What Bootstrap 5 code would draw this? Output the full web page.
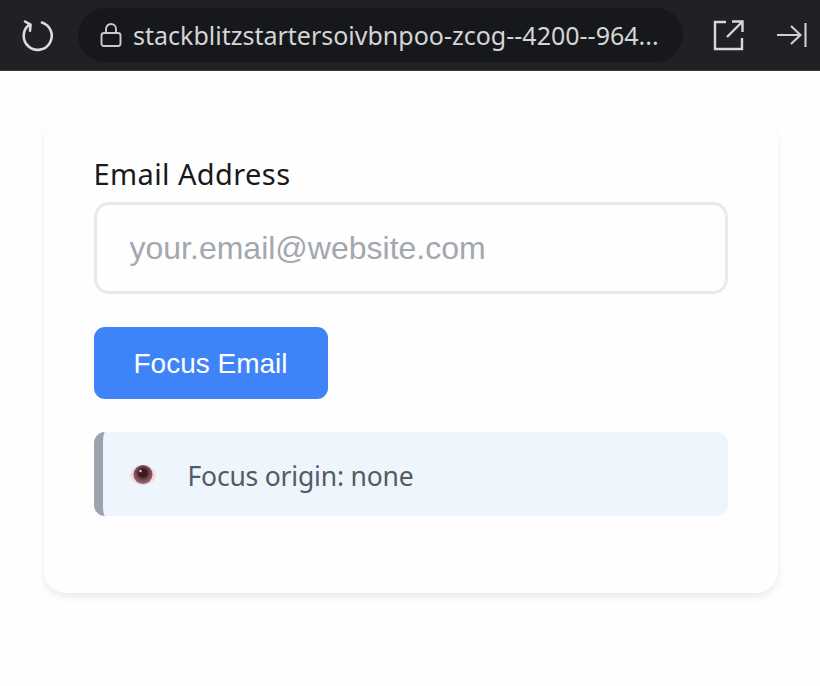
<!DOCTYPE html>
<html lang="en">
<head>
<meta charset="utf-8">
<title>Focus origin</title>
<link href="https://cdn.jsdelivr.net/npm/bootstrap@5.3.0/dist/css/bootstrap.min.css" rel="stylesheet">
<style>
html, body { height: 100%; }
body { background: #fefefe; overflow: hidden; font-family: "Noto Sans", "Open Sans", sans-serif; }
.top-strip { height: 71px; background: #202124; padding: 0 0 0 19px; border-bottom: 1px solid #3a3b3d; }
.addr-pill { width: 605px; height: 54px; margin-left: 25px; background: #17181b; border-radius: 27px; padding-left: 22px; color: #d4d5d6; }
.addr-text { font-size: 25px; margin-left: 11px; white-space: nowrap; line-height: 1; }
.ic-ext { margin-left: 30px; }
.ic-side { margin-left: 31px; }
.form-shell { margin: 49px 42px 0 44px; height: 473px; padding: 34px 50px 0 49.5px; background: #fefefe; border-radius: 22px; box-shadow: 0 4px 7px rgba(0,0,0,.08); }
.lbl { font-size: 29px; line-height: 40px; letter-spacing: .4px; color: #17191c; margin: 0 0 8px; display: block; }
.mail-in.form-control { height: 92px; border: 3px solid #e8e9eb; border-radius: 15px; padding: 0 33px; font-family: "Liberation Sans", Arial, sans-serif; font-size: 32px; background: #fefefe; box-shadow: none; }
.mail-in.form-control::placeholder { color: #a3a7af; opacity: 1; }
.go-btn.btn { display: block; width: 234px; height: 72px; margin-top: 33px; padding: 2px 0 0; border: 0; border-radius: 11px; background: #3f83f8; color: #fff; font-family: "Liberation Sans", Arial, sans-serif; font-size: 28px; }
.origin-box { height: 84px; margin-top: 33px; background: #eff5fc; border-left: 9px solid #9ca3af; border-radius: 11px; padding-left: 26px; color: #555b64; font-size: 26.5px; letter-spacing: -.2px; }
.origin-txt { margin-left: 31px; padding-top: 4px; line-height: 1; }
.eye-ic { margin-top: 1px; }
</style>
</head>
<body>
<header class="top-strip d-flex align-items-center">
  <svg class="flex-shrink-0" width="34" height="34" viewBox="0 0 34 34" fill="none" stroke="#dcdcdc" stroke-width="2.6" stroke-linecap="round" stroke-linejoin="round" aria-hidden="true">
    <path d="M10.5 6.5A14 14 0 1 0 23 4.5"/><path d="M6 3.5l5.5 3.2-.5 6"/>
  </svg>
  <div class="addr-pill d-flex align-items-center flex-shrink-0">
    <svg width="22" height="26" viewBox="0 0 22 26" fill="none" stroke="#c9cacb" stroke-width="1.9" aria-hidden="true">
      <rect x="1.5" y="11" width="19" height="13" rx="2.5"/><path d="M6 11V7a5 5 0 0 1 10 0v4"/>
    </svg>
    <span class="addr-text">stackblitzstartersoivbnpoo-zcog--4200--964...</span>
  </div>
  <svg class="ic-ext flex-shrink-0" width="32" height="32" viewBox="0 0 32 32" fill="none" stroke="#d8d8d8" stroke-width="2.4" aria-hidden="true">
    <path d="M13 3H2v27h27V19"/><path d="M19 2.500h10.500V13M29 3L14 18"/>
  </svg>
  <svg class="ic-side flex-shrink-0" width="32" height="28" viewBox="0 0 32 28" fill="none" stroke="#d0d0d0" stroke-width="2.1" aria-hidden="true">
    <path d="M1 14h23M15 5l9.500 9-9.500 9M29.500 2v24"/>
  </svg>
</header>
<main class="form-shell">
  <label class="lbl" for="mail">Email Address</label>
  <input id="mail" class="form-control mail-in" type="email" placeholder="your.email@website.com">
  <button class="btn go-btn" type="button">Focus Email</button>
  <div class="origin-box d-flex align-items-center">
    <svg class="eye-ic" width="28" height="24" viewBox="0 0 28 24" aria-hidden="true">
      <defs>
        <radialGradient id="scl"><stop offset=".6" stop-color="#e3caca"/><stop offset="1" stop-color="#f3ebee"/></radialGradient>
        <radialGradient id="iri" cx=".5" cy=".42"><stop offset=".42" stop-color="#3d1a22"/><stop offset=".62" stop-color="#6b3a44"/><stop offset="1" stop-color="#935f69"/></radialGradient>
      </defs>
      <ellipse cx="14" cy="12" rx="13.500" ry="10.500" fill="url(#scl)"/>
      <circle cx="14" cy="11.500" r="9.500" fill="url(#iri)"/>
      <circle cx="11.500" cy="8" r="1.300" fill="#d9c3c8"/>
    </svg>
    <span class="origin-txt">Focus origin: none</span>
  </div>
</main>
<script src="https://cdn.jsdelivr.net/npm/bootstrap@5.3.0/dist/js/bootstrap.bundle.min.js"></script>
</body>
</html>
